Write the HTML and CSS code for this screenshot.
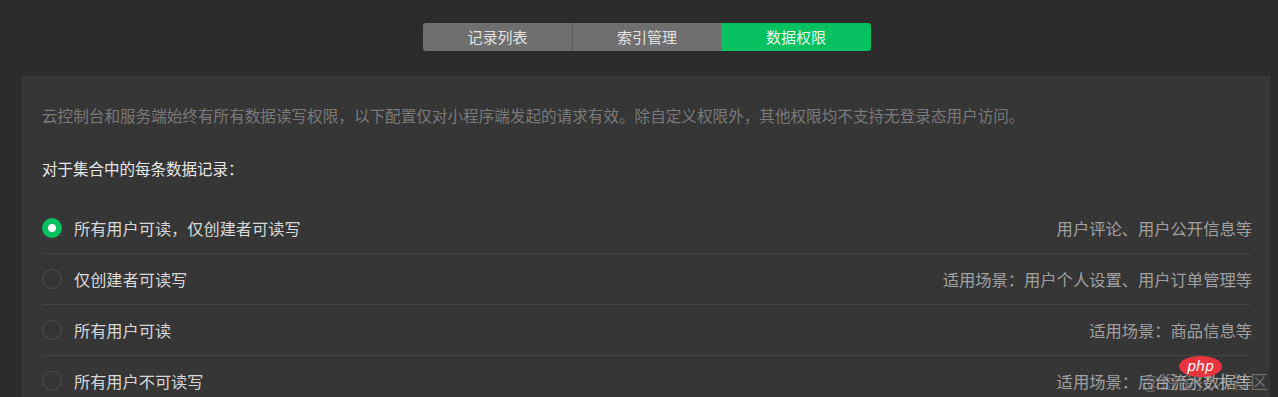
FILE: index.html
```html
<!DOCTYPE html>
<html lang="zh-CN">
<head>
<meta charset="utf-8">
<link rel="stylesheet" href="styles.css">
</head>
<body>
<div class="page">
  <div class="tabs">
    <div class="tab">记录列表</div>
    <div class="tab">索引管理</div>
    <div class="tab active">数据权限</div>
  </div>
  <div class="panel">
    <p class="desc">云控制台和服务端始终有所有数据读写权限，以下配置仅对小程序端发起的请求有效。除自定义权限外，其他权限均不支持无登录态用户访问。</p>
    <p class="head">对于集合中的每条数据记录：</p>
    <div class="list">
      <div class="row">
        <span class="radio checked"></span>
        <span class="label">所有用户可读，仅创建者可读写</span>
        <span class="hint">用户评论、用户公开信息等</span>
      </div>
      <div class="row">
        <span class="radio"></span>
        <span class="label">仅创建者可读写</span>
        <span class="hint">适用场景：用户个人设置、用户订单管理等</span>
      </div>
      <div class="row">
        <span class="radio"></span>
        <span class="label">所有用户可读</span>
        <span class="hint">适用场景：商品信息等</span>
      </div>
      <div class="row">
        <span class="radio"></span>
        <span class="label">所有用户不可读写</span>
        <span class="hint">适用场景：后台流水数据等</span>
      </div>
    </div>
  </div>
</div>
<div class="watermark">@掘金技术社区</div>
<div class="phplogo">php</div>
</body>
</html>
```
FILE: styles.css
```css
html, body {
  margin: 0;
  padding: 0;
  background: #2c2c2c;
  height: 397px;
  overflow: hidden;
}
body {
  font-family: "Noto Sans CJK SC", "Noto Sans", sans-serif;
  position: relative;
}
.page {
  margin: 0 8px 0 22px;
}
.tabs {
  display: flex;
  justify-content: center;
  padding-top: 23px;
  margin-bottom: 25px;
  padding-left: 2px;
}
.tab {
  width: 149px;
  height: 28px;
  background: #6f6f6f;
  color: #e2e2e2;
  font-size: 15px;
  line-height: 28px;
  text-align: center;
  border-left: 1px solid #5e5e5e;
  box-sizing: border-box;
}
.tab:first-child {
  border-left: none;
  border-radius: 3px 0 0 3px;
}
.tab.active {
  background: #07c160;
  color: #eaf8f0;
  border-left: none;
  border-radius: 0 3px 3px 0;
  width: 150px;
}
.panel {
  background: #363636;
  padding: 28px 18px 0 20px;
  height: 321px;
  overflow: hidden;
  box-sizing: border-box;
}
.desc {
  margin: 0;
  font-size: 15.6px;
  line-height: 22px;
  color: #7a7a7a;
}
.head {
  margin: 31px 0 0;
  font-size: 15.5px;
  line-height: 22px;
  color: #e8e8e8;
}
.list {
  margin-top: 24px;
}
.row {
  display: flex;
  align-items: center;
  height: 50px;
  border-bottom: 1px solid #424242;
}
.radio {
  width: 20px;
  height: 20px;
  box-sizing: border-box;
  border: 1px solid #4c4c4c;
  border-radius: 50%;
  margin-right: 12px;
  flex: none;
}
.radio.checked {
  border: 6px solid #07c160;
  background: #ffffff;
}
.label {
  font-size: 16.2px;
  color: #d8d8d8;
  flex: 1;
}
.hint {
  font-size: 16.3px;
  color: #a0a0a0;
}
.watermark {
  position: absolute;
  left: 1143px;
  top: 369px;
  font-size: 18px;
  line-height: 24px;
  color: rgba(255, 255, 255, 0.28);
}
.phplogo {
  position: absolute;
  left: 1179px;
  top: 356px;
  width: 43px;
  height: 21px;
  border-radius: 50%;
  background: #e8343f;
  color: #ffffff;
  font-family: "DejaVu Sans", sans-serif;
  font-style: italic;
  font-size: 14px;
  line-height: 20px;
  text-align: center;
}
```
